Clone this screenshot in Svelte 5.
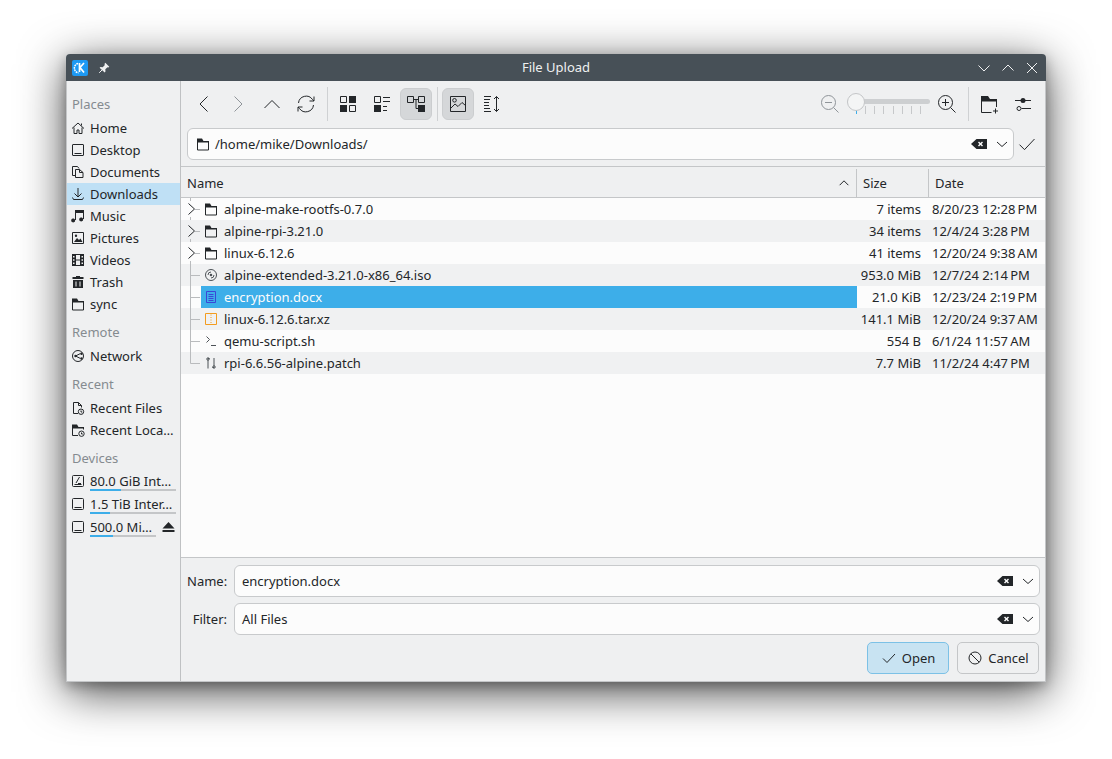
<script>
  const icons = {
    home: { s: 'M2 8.500 8 3l6 5.500M4 7.500v6h3v-3.500h2v3.500h3v-6M11.500 3.500v2' },
    desktop: { s: 'M3 2.500h10a.5.5 0 0 1 .5.5v10a.5.5 0 0 1-.5.5H3a.5.5 0 0 1-.5-.5V3a.5.5 0 0 1 .5-.5zM4.500 11.500h7' },
    documents: { s: 'M7.500 2.500h-5v9h3M7.500 2.500l1.500 2M5.500 5.500h4l3.500 3v5H5.500zM9.500 5.500v3h3.500' },
    downloads: { s: 'M8 2v8.500M4.500 7.500 8 11l3.500-3.500M2.500 11.500l1 2h9l1-2' },
    music: { s: 'M5.500 12V3.500h8V11', f: 'M5 2h9v3H5zM3.800 10.500a2 2 0 1 0 0 3.800 2 2 0 0 0 0-3.800zM11.800 9.500a2 2 0 1 0 0 3.800 2 2 0 0 0 0-3.800z' },
    pictures: { s: 'M2.500 2.500h11v11h-11z', f: 'M4 12l3-4 2 2 1.500-1.500L12.500 12zM6 4.500a1.200 1.200 0 1 0 0 2.400 1.200 1.200 0 0 0 0-2.400z' },
    videos: { s: 'M2.500 2.500h11v11h-11zM5.500 2.500v11M10.500 2.500v11M5.500 8h5', f: 'M2 2h3.500v12H2zM10.500 2H14v12h-3.500zM3 4v1.500h1.500V4zM3 7.200v1.500h1.500V7.200zM3 10.500V12h1.500v-1.500zM11.500 4v1.500H13V4zM11.500 7.200v1.500H13V7.200zM11.500 10.500V12H13v-1.500z' },
    trash: { f: 'M6 2h4v1h3.500v2h-11V3H6zM3 6h10v8H3zM5.500 7.500v5h1v-5zM9.500 7.500v5h1v-5z' },
    folder: { s: 'M2.500 6v8h11V6', f: 'M2 2.500h5l1.500 2.500H14v1.500H2z' },
    network: { s: 'M8 2.500a5.500 5.500 0 1 0 0 11 5.500 5.500 0 0 0 0-11zM10.500 5.500 5.500 8l5 2.500', f: 'M11.500 4.500a1.200 1.200 0 1 0 0 2.400 1.200 1.200 0 0 0 0-2.400zM5.500 6.800a1.200 1.200 0 1 0 0 2.400 1.200 1.200 0 0 0 0-2.400zM11.500 9.300a1.200 1.200 0 1 0 0 2.400 1.200 1.200 0 0 0 0-2.400z' },
    recentfile: { s: 'M8 13.500H3.500v-11h5l3 3v2M8.500 2.500v3h3M11 9a2.700 2.700 0 1 0 0 5.400A2.700 2.700 0 0 0 11 9zM11 10.500v1.500h1.300' },
    recentplace: { s: 'M2.500 6v7.500H8M13.500 6v1.500M11.500 9a2.700 2.700 0 1 0 0 5.400 2.700 2.700 0 0 0 0-5.400zM11.500 10.500v1.500h1.300', f: 'M2 2.500h5l1.500 2.500H14v1.500H2z' },
    hdd: { s: 'M3.500 2.500h9a1 1 0 0 1 1 1v9a1 1 0 0 1-1 1h-9a1 1 0 0 1-1-1v-9a1 1 0 0 1 1-1zM4.500 11.500h7' },
    hddsys: { s: 'M3.500 2.500h9a1 1 0 0 1 1 1v9a1 1 0 0 1-1 1h-9a1 1 0 0 1-1-1v-9a1 1 0 0 1 1-1zM4.500 11.500h7M6 10l3.500-6M8 10.500h3' },
    eject: { f: 'M8.500 3l6 6.500h-12zM2.500 11h12v2h-12z' },
    iso: { s: 'M8 2.500a5.500 5.500 0 1 0 0 11 5.500 5.500 0 0 0 0-11zM5 8a3 3 0 0 1 3-3M11 8a3 3 0 0 1-3 3', f: 'M8 6.700a1.300 1.300 0 1 0 0 2.600 1.300 1.300 0 0 0 0-2.600z' },
    doc: { s: 'M3.500 2.500h9v11h-9zM5.500 5.500h5M5.500 7.500h5M5.500 9.500h5M5.500 11.500h5' },
    zip: { s: 'M2.500 2.500h11v11h-11zM8 3.500v1M8 6v1M8 8.500v1M8 11v1' },
    script: { s: 'M3.500 3.500l3 3-3 3M8 12.500h5' },
    patch: { s: 'M5 5v8.500M11 3v8M5 3.500h1.500M9.500 12.500H11M4 3h2v2H4zM10 11h2v2h-2z' },
    back: { vb: 22, s: 'M14.500 3.500 7 11l7.500 7.500' },
    forward: { vb: 22, s: 'M7.500 3.500 15 11l-7.500 7.500' },
    up: { vb: 22, s: 'M3.500 15 11 7.500 18.500 15' },
    reload: { vb: 22, s: 'M3.500 10a7.700 7.700 0 0 1 14-3.500l1.500 1.500M19 3.500V8h-4.500M18.500 12a7.700 7.700 0 0 1-14 3.500L3 14M3 18.500V14h4.500' },
    icons: { vb: 22, s: 'M3.500 3.500h6v6h-6zM12.500 12.500h6v6h-6z', f: 'M12 3h7v7h-7zM3 12h7v7H3z' },
    compact: { vb: 22, s: 'M3.500 3.500h6v6h-6zM12 4.500h7M12 8.500h7M12 13.500h4M12 17.500h4', f: 'M3 12h7v7H3z' },
    tree: { vb: 22, s: 'M2.500 3.500h6v6h-6zM13.500 3.500h6v6h-6zM8.500 6.500h5M11 6.500V15.500h2', f: 'M13 12h7v7h-7z' },
    preview: { vb: 22, s: 'M3.500 3.500h15v15h-15zM3.500 15.500 8 11l3 2.500 4-4 3.500 3M7.500 5.500a1.800 1.800 0 1 0 0 3.600 1.800 1.800 0 0 0 0-3.600z' },
    sort: { vb: 22, s: 'M4 3.500h7M4 6.500h6M4 9.500h5M4 12.500h5M4 15.500h6M4 18.500h7M16.500 3.500v15M14 6l2.500-2.500L19 6M14 16l2.500 2.500L19 16' },
    zoomout: { vb: 22, s: 'M9.500 2.500a7 7 0 1 0 0 14 7 7 0 0 0 0-14zM6 9.500h7M14.500 14.500l5 5' },
    zoomin: { vb: 22, s: 'M9.500 2.500a7 7 0 1 0 0 14 7 7 0 0 0 0-14zM6 9.500h7M9.500 6v7M14.500 14.500l5 5' },
    newfolder: { vb: 22, s: 'M3.500 8v11.500h10M18.500 8v6M17.500 15.500v5M15 18h5', f: 'M3 3h7l2 3h7v2.500H3z' },
    settings: { vb: 22, s: 'M3 7.500h16M9.500 15.500H19', f: 'M11 5a2.500 2.500 0 1 0 0 5 2.500 2.500 0 0 0 0-5z' },
    chevron: { s: 'M3 6l5 4.500L13 6' },
    sortup: { s: 'M3 10.500l5-5 5 5' },
    expand: { s: 'M4.500 2.500l6 5.500-6 5.500' },
    check: { s: 'M2 8.500l4 4L14 4' },
    cancel: { s: 'M8 2a6 6 0 1 0 0 12A6 6 0 0 0 8 2zM3.800 3.800l8.400 8.400' },
    clear: { f: 'M5.500 3H16v10H5.500L0 8zM8 5.500 7 6.500 8.500 8 7 9.500l1 1L9.500 9 11 10.500l1-1L10.500 8 12 6.500l-1-1L9.500 7z' },
    pin: { s: 'M2.500 13.500 6 10', f: 'M9.500 2 14 6.500l-1 1-1-.5-2.500 2.500.2 2.500-1 1L3 7.800l1-1 2.500.2L9 4.500l-.5-1z' },
    wmdown: { s: 'M2.500 5.500 8 11l5.500-5.500' },
    wmup: { s: 'M2.500 10.500 8 5l5.500 5.500' },
    wmclose: { s: 'M3 3l10 10M13 3 3 13' }
  };

  const places = [
    { name: 'Places', items: [
      { icon: 'home', label: 'Home' },
      { icon: 'desktop', label: 'Desktop' },
      { icon: 'documents', label: 'Documents' },
      { icon: 'downloads', label: 'Downloads', active: true },
      { icon: 'music', label: 'Music' },
      { icon: 'pictures', label: 'Pictures' },
      { icon: 'videos', label: 'Videos' },
      { icon: 'trash', label: 'Trash' },
      { icon: 'folder', label: 'sync' }
    ] },
    { name: 'Remote', items: [{ icon: 'network', label: 'Network' }] },
    { name: 'Recent', items: [
      { icon: 'recentfile', label: 'Recent Files' },
      { icon: 'recentplace', label: 'Recent Loca…' }
    ] }
  ];

  const devices = [
    { icon: 'hddsys', label: '80.0 GiB Int…', used: 36 },
    { icon: 'hdd', label: '1.5 TiB Inter…', used: 23 },
    { icon: 'hdd', label: '500.0 Mi…', used: 35, eject: true }
  ];

  const files = [
    { icon: 'folder', name: 'alpine-make-rootfs-0.7.0', size: '7 items', date: '8/20/23 12:28\u202fPM', dir: true },
    { icon: 'folder', name: 'alpine-rpi-3.21.0', size: '34 items', date: '12/4/24 3:28\u202fPM', dir: true },
    { icon: 'folder', name: 'linux-6.12.6', size: '41 items', date: '12/20/24 9:38\u202fAM', dir: true },
    { icon: 'iso', name: 'alpine-extended-3.21.0-x86_64.iso', size: '953.0 MiB', date: '12/7/24 2:14\u202fPM' },
    { icon: 'doc', name: 'encryption.docx', size: '21.0 KiB', date: '12/23/24 2:19\u202fPM', selected: true },
    { icon: 'zip', name: 'linux-6.12.6.tar.xz', size: '141.1 MiB', date: '12/20/24 9:37\u202fAM' },
    { icon: 'script', name: 'qemu-script.sh', size: '554 B', date: '6/1/24 11:57\u202fAM' },
    { icon: 'patch', name: 'rpi-6.6.56-alpine.patch', size: '7.7 MiB', date: '11/2/24 4:47\u202fPM' }
  ];

  const ticks = [0, 1, 2, 3, 4, 5, 6, 7];
</script>

{#snippet ico(name, size = 16, cls = '')}
  {@const i = icons[name]}
  <svg class="ico {cls}" width={size} height={size} viewBox="0 0 {i.vb || 16} {i.vb || 16}">
    {#if i.f}<path class="f" d={i.f} />{/if}
    {#if i.s}<path class="s" d={i.s} />{/if}
  </svg>
{/snippet}

{#snippet field(text)}
  <div class="field">
    <span class="field-text">{text}</span>
    {@render ico('clear', 16)}
    {@render ico('chevron', 16, 'field-chev')}
  </div>
{/snippet}

<div class="desktop">
  <div class="window">
    <header class="titlebar">
      <div class="tb-left">
        <svg class="kde" width="16" height="16" viewBox="0 0 16 16">
          <rect width="16" height="16" rx="2" fill="#1d99f3" />
          <path d="M6 3.500a4.800 4.800 0 0 0 .5 9.400" fill="none" stroke="#fff" stroke-width="1.500" stroke-dasharray="1.800 .7" />
          <path d="M7.500 3v9M12 3 8 7.500l4 5" fill="none" stroke="#fff" stroke-width="1.700" />
        </svg>
        {@render ico('pin', 14)}
      </div>
      <span class="tb-title">File Upload</span>
      <div class="tb-right">
        {@render ico('wmdown', 16)}
        {@render ico('wmup', 16)}
        {@render ico('wmclose', 16)}
      </div>
    </header>

    <div class="body">
      <aside class="sidebar">
        {#each places as group}
          <div class="group-name">{group.name}</div>
          {#each group.items as item}
            <div class="place" class:active={item.active}>
              {@render ico(item.icon)}
              <span>{item.label}</span>
            </div>
          {/each}
        {/each}
        <div class="group-name">Devices</div>
        {#each devices as d}
          <div class="device">
            {@render ico(d.icon)}
            <div class="device-info">
              <span>{d.label}</span>
              <div class="cap"><i style="width: {d.used}%"></i></div>
            </div>
            {#if d.eject}{@render ico('eject', 16, 'eject')}{/if}
          </div>
        {/each}
      </aside>

      <main class="main">
        <div class="toolbar">
          <button class="tool">{@render ico('back', 22)}</button>
          <button class="tool dim">{@render ico('forward', 22)}</button>
          <button class="tool">{@render ico('up', 22)}</button>
          <button class="tool">{@render ico('reload', 22)}</button>
          <span class="sep"></span>
          <button class="tool">{@render ico('icons', 22)}</button>
          <button class="tool">{@render ico('compact', 22)}</button>
          <button class="tool on">{@render ico('tree', 22)}</button>
          <span class="sep"></span>
          <button class="tool on">{@render ico('preview', 22)}</button>
          <button class="tool narrow">{@render ico('sort', 22)}</button>
          <span class="grow"></span>
          <button class="tool dim">{@render ico('zoomout', 22)}</button>
          <div class="slider">
            <div class="track"></div>
            <div class="ticks">
              {#each ticks as t}<i class:first={t === 0}></i>{/each}
            </div>
            <div class="handle"></div>
          </div>
          <button class="tool">{@render ico('zoomin', 22)}</button>
          <span class="sep"></span>
          <button class="tool">{@render ico('newfolder', 22)}</button>
          <button class="tool settings">
            {@render ico('settings', 22)}
            <svg class="ring" width="22" height="22" viewBox="0 0 22 22"><circle cx="7" cy="15.500" r="2" /></svg>
          </button>
        </div>

        <div class="pathrow">
          <div class="field path">
            {@render ico('folder')}
            <span class="field-text">/home/mike/Downloads/</span>
            {@render ico('clear', 16)}
            {@render ico('chevron', 16, 'field-chev')}
          </div>
          {@render ico('check', 20, 'go')}
        </div>

        <div class="header">
          <div class="col-name">Name {@render ico('sortup', 14)}</div>
          <div class="col-size">Size</div>
          <div class="col-date">Date</div>
        </div>

        <div class="list">
          {#each files as f, idx}
            <div class="row" class:alt={idx % 2 === 1}>
              <div class="gutter">
                {#if f.dir}{@render ico('expand', 16)}{/if}
              </div>
              <div class="cell-name" class:selected={f.selected}>
                {@render ico(f.icon, 16, f.icon)}
                <span>{f.name}</span>
              </div>
              <div class="cell-size">{f.size}</div>
              <div class="cell-date">{f.date}</div>
            </div>
          {/each}
          <svg class="tree-lines" width="20" height="176" viewBox="0 0 20 176">
            <path d="M9.500 0v3M9.500 19v3M9.500 41v3M9.500 63v102.500H19M14 11.500h5M14 33.500h5M14 55.500h5M9.500 77.500H19M9.500 99.500H19M9.500 121.500H19M9.500 143.500H19" />
          </svg>
        </div>

        <div class="form">
          <div class="form-row">
            <label for="name-field">Name:</label>
            <div id="name-field" class="form-field">{@render field('encryption.docx')}</div>
          </div>
          <div class="form-row">
            <label for="filter-field">Filter:</label>
            <div id="filter-field" class="form-field">{@render field('All Files')}</div>
          </div>
          <div class="actions">
            <button class="btn primary">{@render ico('check', 16)} Open</button>
            <button class="btn">{@render ico('cancel', 16)} Cancel</button>
          </div>
        </div>
      </main>
    </div>
  </div>
</div>

<style>
  :global(body) {
    margin: 0;
    background: #fff;
  }

  .desktop {
    height: 759px;
    box-sizing: border-box;
    padding: 54px 0 0 66px;
    overflow: hidden;
  }

  .window {
    width: 980px;
    height: 628px;
    display: flex;
    flex-direction: column;
    border-radius: 4px 4px 0 0;
    background: #eff0f1;
    color: #232629;
    font-family: "Noto Sans", sans-serif;
    font-size: 13px;
    box-shadow: 0 10px 46px rgba(0, 0, 0, 0.72), 0 4px 12px rgba(0, 0, 0, 0.25);
  }

  .ico {
    flex: none;
    display: block;
  }

  .s {
    fill: none;
    stroke: currentColor;
    stroke-width: 1;
    vector-effect: non-scaling-stroke;
  }

  .f {
    fill: currentColor;
    fill-rule: evenodd;
  }

  .titlebar {
    height: 27px;
    flex: none;
    display: grid;
    grid-template-columns: 1fr auto 1fr;
    align-items: center;
    background: #475057;
    color: #eff0f1;
    border-radius: 4px 4px 0 0;
  }

  .tb-title {
    padding-bottom: 2px;
  }

  .tb-left {
    display: flex;
    align-items: center;
    gap: 9px;
    padding-left: 6px;
  }

  .tb-right {
    display: flex;
    justify-content: flex-end;
    gap: 8px;
    padding-right: 6px;
  }

  .body {
    flex: 1;
    display: flex;
    min-height: 0;
    border: 1px solid #c4c6c8;
    border-top: 0;
  }

  .sidebar {
    width: 114px;
    flex: none;
    box-sizing: border-box;
    padding-top: 12px;
    border-right: 1px solid #bfc1c3;
  }

  .group-name {
    height: 22px;
    line-height: 22px;
    margin-top: 6px;
    padding-left: 5px;
    color: #858b90;
  }

  .group-name:first-child {
    margin-top: 0;
    margin-bottom: 2px;
  }

  .place + .group-name {
    margin-top: 6px;
    margin-bottom: 2px;
  }

  .place {
    height: 22px;
    display: flex;
    align-items: center;
    gap: 4px;
    padding-left: 3px;
    white-space: nowrap;
  }

  .place.active {
    background: #bfe0f5;
  }

  .device {
    height: 23px;
    display: flex;
    align-items: center;
    gap: 4px;
    padding-left: 3px;
    white-space: nowrap;
  }

  .device .ico {
    margin-top: -4px;
  }

  .device-info {
    width: 86px;
    line-height: 16px;
    margin-top: -2px;
  }

  .device:last-child .device-info {
    width: 66px;
  }

  .cap {
    height: 2px;
    background: #c4c6c8;
  }

  .cap i {
    display: block;
    height: 100%;
    background: #3daee9;
  }

  .main {
    flex: 1;
    min-width: 0;
    display: flex;
    flex-direction: column;
  }

  .toolbar {
    display: flex;
    align-items: center;
    gap: 2px;
    padding: 7px 6px 0 7px;
  }

  .tool {
    width: 32px;
    height: 32px;
    flex: none;
    display: grid;
    place-items: center;
    padding: 0;
    border: 1px solid transparent;
    border-radius: 6px;
    background: none;
    color: #232629;
  }

  .tool.narrow {
    margin-left: -1px;
  }

  .tool.dim {
    color: #8f9499;
  }

  .tool.on {
    background: #d5d7d9;
    border-color: #cbcdcf;
  }

  .settings {
    position: relative;
  }

  .ring {
    position: absolute;
    left: 4px;
    top: 4px;
    fill: #eff0f1;
    stroke: #232629;
  }

  .sep {
    width: 1px;
    height: 34px;
    flex: none;
    margin: -1px 2px -1px 3px;
    background: #cfd1d3;
  }

  .grow {
    flex: 1;
  }

  .slider {
    position: relative;
    width: 84px;
    height: 32px;
    flex: none;
    margin: 0 -1px 0 -2px;
  }

  .track {
    position: absolute;
    left: 1px;
    right: 0;
    top: 11px;
    height: 5px;
    border-radius: 3px;
    background: #cdcfd1;
  }

  .ticks {
    position: absolute;
    left: 10px;
    right: 9px;
    top: 18px;
    height: 8px;
    display: flex;
    justify-content: space-between;
  }

  .ticks i {
    width: 1px;
    background: #c6c8ca;
  }

  .ticks i.first {
    background: #3daee9;
    height: 5px;
    margin-top: 3px;
  }

  .handle {
    position: absolute;
    left: 1px;
    top: 5px;
    width: 16px;
    height: 16px;
    border: 1px solid #c4c6c8;
    border-radius: 50%;
    background: #f4f5f5;
  }

  .pathrow {
    display: flex;
    align-items: center;
    gap: 3px;
    margin-top: 8px;
    padding: 0 8px 0 6px;
  }

  .path {
    flex: 1;
  }

  .field {
    height: 32px;
    box-sizing: border-box;
    display: flex;
    align-items: center;
    padding: 0 3px 0 7px;
    gap: 4px;
    border: 1px solid #c8cacc;
    border-radius: 6px;
    background: #fcfcfc;
  }

  .field-text {
    flex: 1;
    min-width: 0;
  }

  .field-chev {
    margin-left: 3px;
  }

  .header {
    height: 30px;
    flex: none;
    margin-top: 6px;
    display: grid;
    grid-template-columns: 675px 72px 1fr;
    align-items: stretch;
    border-top: 1px solid #c4c6c8;
    border-bottom: 1px solid #c4c6c8;
    line-height: 30px;
  }

  .col-name {
    display: flex;
    justify-content: space-between;
    align-items: center;
    padding: 0 5px 0 6px;
  }

  .col-size,
  .col-date {
    border-left: 1px solid #c4c6c8;
    margin: 2px 0 1px;
    padding-left: 6px;
    line-height: 29px;
  }

  .list {
    position: relative;
    flex: 1;
    background: #fcfcfc;
    border-bottom: 1px solid #c4c6c8;
  }

  .tree-lines {
    position: absolute;
    left: 0;
    top: 0;
    fill: none;
    stroke: #b9bbbd;
    stroke-width: 1;
  }

  .row {
    height: 22px;
    display: grid;
    grid-template-columns: 20px 656px 72px 1fr;
    align-items: stretch;
    line-height: 22px;
    white-space: nowrap;
  }

  .row.alt {
    background: #f0f1f2;
  }

  .gutter {
    display: flex;
    align-items: center;
    padding-left: 3px;
  }

  .cell-name {
    display: flex;
    align-items: center;
    gap: 5px;
    padding-left: 2px;
  }

  .cell-name.selected {
    background: #3daee9;
    color: #fcfcfc;
  }

  .cell-name :global(.doc) {
    color: #3b46d6;
  }

  .cell-name :global(.zip) {
    color: #f39c1f;
  }

  .cell-name :global(.iso),
  .cell-name :global(.script),
  .cell-name :global(.patch) {
    color: #4d5257;
  }

  .cell-size {
    text-align: right;
    padding-right: 8px;
  }

  .cell-date {
    padding-left: 3px;
  }

  .form {
    flex: none;
    padding: 7px 5px 7px 6px;
    display: flex;
    flex-direction: column;
    gap: 6px;
  }

  .form-row {
    display: grid;
    grid-template-columns: 40px 1fr;
    gap: 7px;
    align-items: center;
  }

  .form-row label {
    text-align: right;
  }

  .actions {
    display: flex;
    justify-content: flex-end;
    gap: 8px;
    margin: 1px 1px 0 0;
  }

  .btn {
    width: 82px;
    height: 32px;
    display: flex;
    align-items: center;
    justify-content: center;
    gap: 5px;
    padding: 0;
    border: 1px solid #c4c6c8;
    border-radius: 5px;
    background: #eff0f1;
    color: #232629;
    font: inherit;
  }

  .btn.primary {
    background: #c8e3f2;
    border-color: #7cc1e6;
  }
</style>
